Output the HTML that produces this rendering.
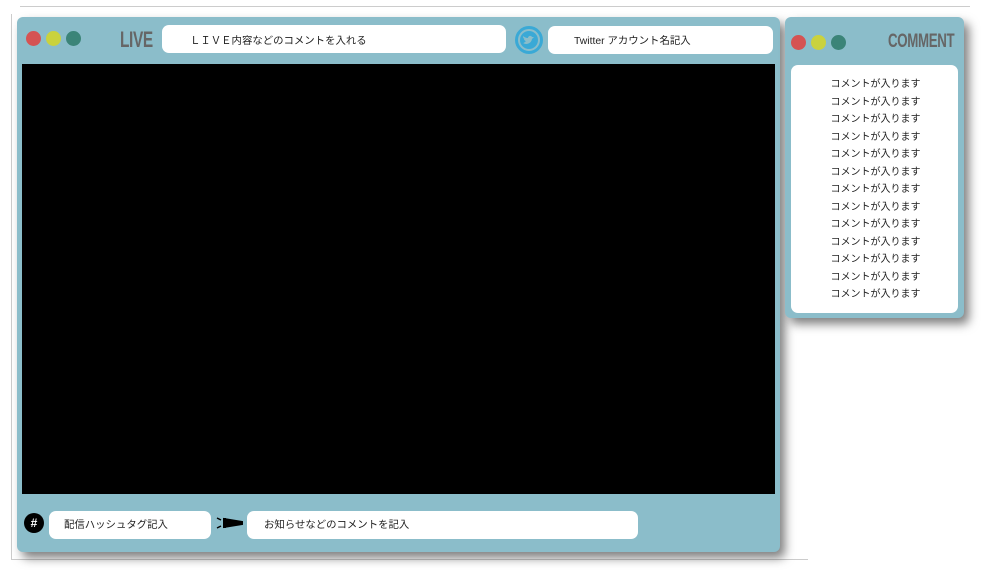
<!DOCTYPE html>
<html><head><meta charset="utf-8"><style>
body{margin:0;width:996px;height:584px;background:#fff;position:relative;overflow:hidden;font-family:"Liberation Sans","Noto Sans CJK JP",sans-serif;}
.a{position:absolute}
.panel{background:#8bbdca;border-radius:6px;box-shadow:5px 6px 10px rgba(0,0,0,.5)}
.box{background:#fff;border-radius:7px;font-size:10.4px;color:#222;line-height:1}
.dot{width:15px;height:15px;border-radius:50%}
.title{font-family:"Liberation Sans",sans-serif;font-weight:bold;color:#666;transform:scaleX(.7);transform-origin:left top;letter-spacing:-0.5px}
</style></head><body>
<div class="a" style="left:20px;top:6px;width:950px;height:1px;background:#ccc"></div>
<div class="a" style="left:11px;top:14px;width:1px;height:546px;background:#ccc"></div>
<div class="a" style="left:11px;top:559px;width:797px;height:1px;background:#ccc"></div>

<div class="a panel" style="left:17px;top:17px;width:763px;height:535px"></div>
<div class="a dot" style="left:26px;top:31px;background:#d55353"></div>
<div class="a dot" style="left:46px;top:31px;background:#cad23d"></div>
<div class="a dot" style="left:66px;top:31px;background:#3b8478"></div>
<div class="a title" style="left:120px;top:27px;font-size:22px">LIVE</div>
<div class="a box" style="left:162px;top:25px;width:344px;height:28px"><span class="a" style="left:28px;top:12px">ＬＩＶＥ内容などのコメントを入れる</span></div>
<svg class="a" style="left:514px;top:25px" width="30" height="30" viewBox="0 0 30 30"><circle cx="15" cy="15" r="12.5" fill="none" stroke="#3aa9d6" stroke-width="3"/><circle cx="15" cy="15" r="9" fill="#3aa9d6"/><path d="M9 18c3 2 8 1 9-4l2-2-2 0c-1-2-4-1-4 1-2 0-4-1-5-2 0 2 1 3 2 3l-1 0c0 1 1 2 2 2-1 1-2 2-3 2z" fill="#8bbdca"/></svg>
<div class="a box" style="left:548px;top:26px;width:225px;height:28px"><span class="a" style="left:26px;top:11px">Twitter アカウント名記入</span></div>
<div class="a" style="left:22px;top:64px;width:753px;height:430px;background:#000"></div>
<div class="a" style="left:24px;top:513px;width:20px;height:20px;border-radius:50%;background:#000;color:#fff;font-size:12px;font-weight:bold;text-align:center;line-height:20px">#</div>
<div class="a box" style="left:49px;top:511px;width:162px;height:28px"><span class="a" style="left:15px;top:10px">配信ハッシュタグ記入</span></div>
<svg class="a" style="left:215px;top:513px" width="30" height="20" viewBox="0 0 30 20"><path d="M9 6 L27 9 L27 11 L9 14Z M10 5 L10 15" fill="#000" stroke="#000" stroke-width="2"/><path d="M2 5 L6 7 M2 15 L6 13" stroke="#000" stroke-width="1.5"/></svg>
<div class="a box" style="left:247px;top:511px;width:391px;height:28px"><span class="a" style="left:17px;top:10px">お知らせなどのコメントを記入</span></div>

<div class="a panel" style="left:785px;top:17px;width:179px;height:301px"></div>
<div class="a dot" style="left:791px;top:35px;background:#d55353"></div>
<div class="a dot" style="left:811px;top:35px;background:#cad23d"></div>
<div class="a dot" style="left:831px;top:35px;background:#3b8478"></div>
<div class="a title" style="left:888px;top:31px;font-size:19px">COMMENT</div>
<div class="a box" style="left:791px;top:65px;width:167px;height:248px;text-align:center;font-size:10px;line-height:17.5px;padding-top:11px;padding-left:2px;box-sizing:border-box">
コメントが入ります<br>コメントが入ります<br>コメントが入ります<br>コメントが入ります<br>コメントが入ります<br>コメントが入ります<br>コメントが入ります<br>コメントが入ります<br>コメントが入ります<br>コメントが入ります<br>コメントが入ります<br>コメントが入ります<br>コメントが入ります</div>
</body></html>
